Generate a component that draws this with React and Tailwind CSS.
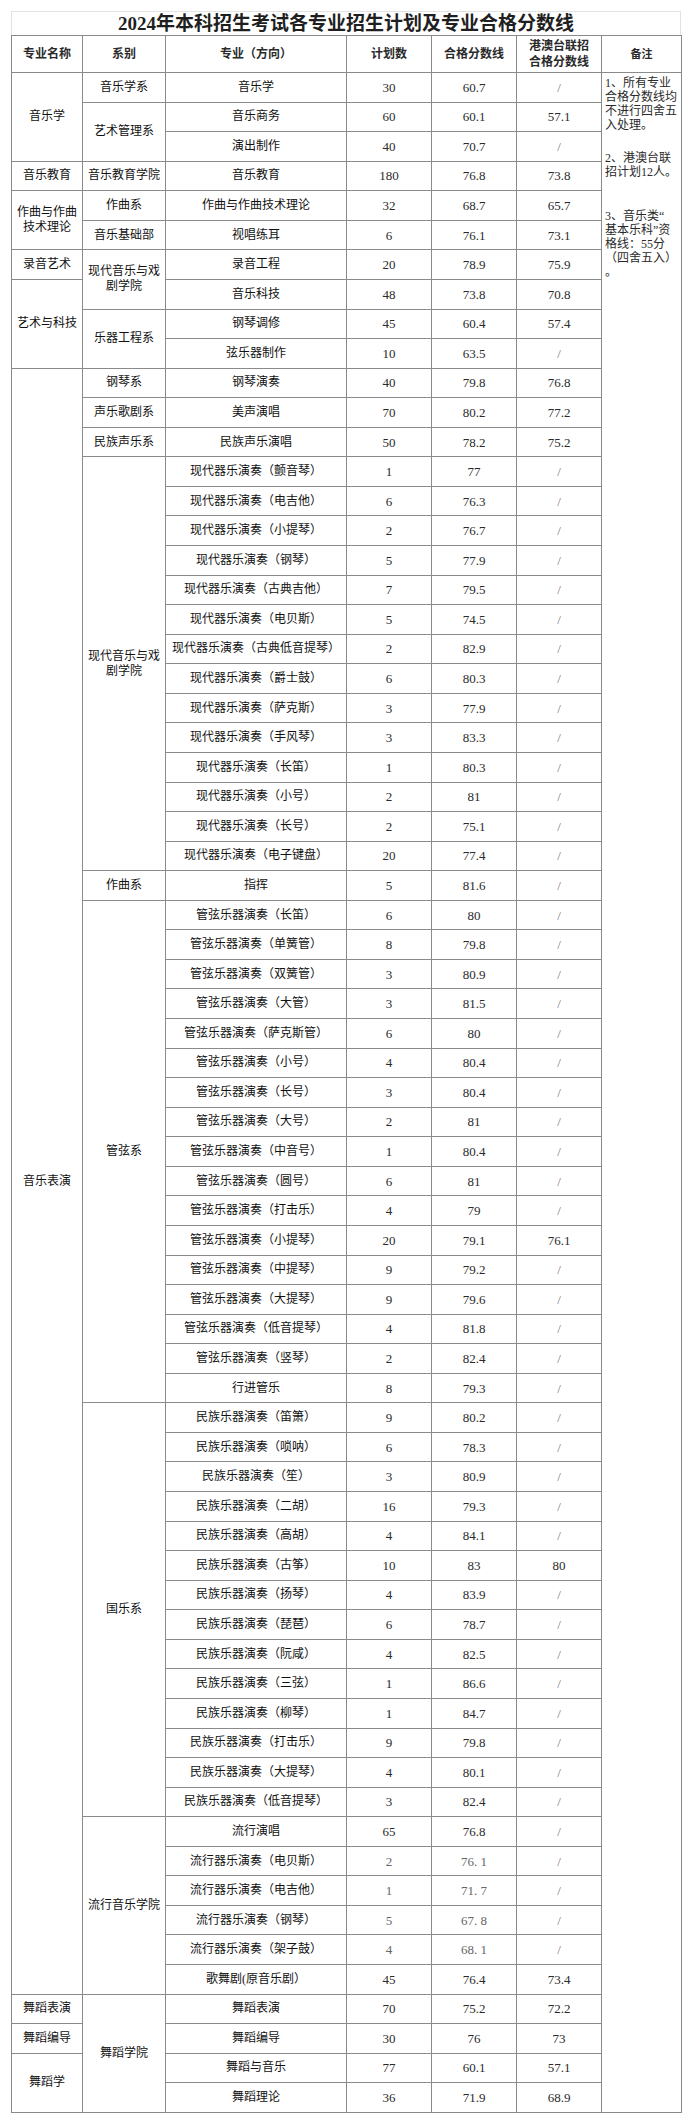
import React from 'react';

const rows = [
  { a: ['音乐学', 3], b: ['音乐学系', 1], m: '音乐学', p: '30', s: '60.7', h: '/' },
  { b: ['艺术管理系', 2], m: '音乐商务', p: '60', s: '60.1', h: '57.1' },
  { m: '演出制作', p: '40', s: '70.7', h: '/' },
  { a: ['音乐教育', 1], b: ['音乐教育学院', 1], m: '音乐教育', p: '180', s: '76.8', h: '73.8' },
  { a: ['作曲与作曲技术理论', 2], b: ['作曲系', 1], m: '作曲与作曲技术理论', p: '32', s: '68.7', h: '65.7' },
  { b: ['音乐基础部', 1], m: '视唱练耳', p: '6', s: '76.1', h: '73.1' },
  { a: ['录音艺术', 1], b: ['现代音乐与戏剧学院', 2], m: '录音工程', p: '20', s: '78.9', h: '75.9' },
  { a: ['艺术与科技', 3], m: '音乐科技', p: '48', s: '73.8', h: '70.8' },
  { b: ['乐器工程系', 2], m: '钢琴调修', p: '45', s: '60.4', h: '57.4' },
  { m: '弦乐器制作', p: '10', s: '63.5', h: '/' },

  { a: ['音乐表演', 55], b: ['钢琴系', 1], m: '钢琴演奏', p: '40', s: '79.8', h: '76.8' },
  { b: ['声乐歌剧系', 1], m: '美声演唱', p: '70', s: '80.2', h: '77.2' },
  { b: ['民族声乐系', 1], m: '民族声乐演唱', p: '50', s: '78.2', h: '75.2' },

  { b: ['现代音乐与戏剧学院', 14], m: '现代器乐演奏（颤音琴）', p: '1', s: '77', h: '/' },
  { m: '现代器乐演奏（电吉他）', p: '6', s: '76.3', h: '/' },
  { m: '现代器乐演奏（小提琴）', p: '2', s: '76.7', h: '/' },
  { m: '现代器乐演奏（钢琴）', p: '5', s: '77.9', h: '/' },
  { m: '现代器乐演奏（古典吉他）', p: '7', s: '79.5', h: '/' },
  { m: '现代器乐演奏（电贝斯）', p: '5', s: '74.5', h: '/' },
  { m: '现代器乐演奏（古典低音提琴）', p: '2', s: '82.9', h: '/' },
  { m: '现代器乐演奏（爵士鼓）', p: '6', s: '80.3', h: '/' },
  { m: '现代器乐演奏（萨克斯）', p: '3', s: '77.9', h: '/' },
  { m: '现代器乐演奏（手风琴）', p: '3', s: '83.3', h: '/' },
  { m: '现代器乐演奏（长笛）', p: '1', s: '80.3', h: '/' },
  { m: '现代器乐演奏（小号）', p: '2', s: '81', h: '/' },
  { m: '现代器乐演奏（长号）', p: '2', s: '75.1', h: '/' },
  { m: '现代器乐演奏（电子键盘）', p: '20', s: '77.4', h: '/' },

  { b: ['作曲系', 1], m: '指挥', p: '5', s: '81.6', h: '/' },

  { b: ['管弦系', 17], m: '管弦乐器演奏（长笛）', p: '6', s: '80', h: '/' },
  { m: '管弦乐器演奏（单簧管）', p: '8', s: '79.8', h: '/' },
  { m: '管弦乐器演奏（双簧管）', p: '3', s: '80.9', h: '/' },
  { m: '管弦乐器演奏（大管）', p: '3', s: '81.5', h: '/' },
  { m: '管弦乐器演奏（萨克斯管）', p: '6', s: '80', h: '/' },
  { m: '管弦乐器演奏（小号）', p: '4', s: '80.4', h: '/' },
  { m: '管弦乐器演奏（长号）', p: '3', s: '80.4', h: '/' },
  { m: '管弦乐器演奏（大号）', p: '2', s: '81', h: '/' },
  { m: '管弦乐器演奏（中音号）', p: '1', s: '80.4', h: '/' },
  { m: '管弦乐器演奏（圆号）', p: '6', s: '81', h: '/' },
  { m: '管弦乐器演奏（打击乐）', p: '4', s: '79', h: '/' },
  { m: '管弦乐器演奏（小提琴）', p: '20', s: '79.1', h: '76.1' },
  { m: '管弦乐器演奏（中提琴）', p: '9', s: '79.2', h: '/' },
  { m: '管弦乐器演奏（大提琴）', p: '9', s: '79.6', h: '/' },
  { m: '管弦乐器演奏（低音提琴）', p: '4', s: '81.8', h: '/' },
  { m: '管弦乐器演奏（竖琴）', p: '2', s: '82.4', h: '/' },
  { m: '行进管乐', p: '8', s: '79.3', h: '/' },

  { b: ['国乐系', 14], m: '民族乐器演奏（笛箫）', p: '9', s: '80.2', h: '/' },
  { m: '民族乐器演奏（唢呐）', p: '6', s: '78.3', h: '/' },
  { m: '民族乐器演奏（笙）', p: '3', s: '80.9', h: '/' },
  { m: '民族乐器演奏（二胡）', p: '16', s: '79.3', h: '/' },
  { m: '民族乐器演奏（高胡）', p: '4', s: '84.1', h: '/' },
  { m: '民族乐器演奏（古筝）', p: '10', s: '83', h: '80' },
  { m: '民族乐器演奏（扬琴）', p: '4', s: '83.9', h: '/' },
  { m: '民族乐器演奏（琵琶）', p: '6', s: '78.7', h: '/' },
  { m: '民族乐器演奏（阮咸）', p: '4', s: '82.5', h: '/' },
  { m: '民族乐器演奏（三弦）', p: '1', s: '86.6', h: '/' },
  { m: '民族乐器演奏（柳琴）', p: '1', s: '84.7', h: '/' },
  { m: '民族乐器演奏（打击乐）', p: '9', s: '79.8', h: '/' },
  { m: '民族乐器演奏（大提琴）', p: '4', s: '80.1', h: '/' },
  { m: '民族乐器演奏（低音提琴）', p: '3', s: '82.4', h: '/' },

  { b: ['流行音乐学院', 6], m: '流行演唱', p: '65', s: '76.8', h: '/' },
  { m: '流行器乐演奏（电贝斯）', p: '2', s: '76. 1', h: '/', g: true },
  { m: '流行器乐演奏（电吉他）', p: '1', s: '71. 7', h: '/', g: true },
  { m: '流行器乐演奏（钢琴）', p: '5', s: '67. 8', h: '/', g: true },
  { m: '流行器乐演奏（架子鼓）', p: '4', s: '68. 1', h: '/', g: true },
  { m: '歌舞剧(原音乐剧）', p: '45', s: '76.4', h: '73.4' },

  { a: ['舞蹈表演', 1], b: ['舞蹈学院', 4], m: '舞蹈表演', p: '70', s: '75.2', h: '72.2' },
  { a: ['舞蹈编导', 1], m: '舞蹈编导', p: '30', s: '76', h: '73' },
  { a: ['舞蹈学', 2], m: '舞蹈与音乐', p: '77', s: '60.1', h: '57.1' },
  { m: '舞蹈理论', p: '36', s: '71.9', h: '68.9' },
];

const cell = 'border border-[#8a8a8a] px-0.5 text-center align-middle';

function Notes() {
  return (
    <div className="pl-[1px] pt-[3px] text-left text-[12px] leading-[14px] text-[#2a2a2a] whitespace-nowrap">
      <div>1、所有专业</div>
      <div>合格分数线均</div>
      <div>不进行四舍五</div>
      <div>入处理。</div>
      <div className="mt-[19px]">2、港澳台联</div>
      <div>招计划12人。</div>
      <div className="mt-[30px]">3、音乐类“</div>
      <div>基本乐科”资</div>
      <div>格线：55分</div>
      <div>（四舍五入）</div>
      <div>。</div>
    </div>
  );
}

export default function App() {
  return (
    <div className="min-h-[2118px] bg-white pl-[11px] pt-[11px] font-['Liberation_Serif','Noto_Sans_CJK_SC',serif] text-[#1a1a1a]">
      <div className="flex h-[24px] w-[670px] items-center justify-center border-x border-t border-[#e2e2e2] text-[19px] font-bold leading-none text-[#1f1f1f]">
        2024年本科招生考试各专业招生计划及专业合格分数线
      </div>
      <table className="w-[670px] table-fixed border-collapse">
        <colgroup>
          <col className="w-[71px]" />
          <col className="w-[83px]" />
          <col className="w-[181px]" />
          <col className="w-[85px]" />
          <col className="w-[85px]" />
          <col className="w-[85px]" />
          <col className="w-[80px]" />
        </colgroup>
        <thead>
          <tr className="h-[37px] text-[12px] font-bold leading-[16px] text-[#2a2a2a]">
            <th className={cell}>专业名称</th>
            <th className={cell}>系别</th>
            <th className={cell}>专业（方向）</th>
            <th className={cell}>计划数</th>
            <th className={cell}>合格分数线</th>
            <th className={cell}>
              港澳台联招
              <br />
              合格分数线
            </th>
            <th className={`${cell} text-[11px]`}>备注</th>
          </tr>
        </thead>
        <tbody>
          {rows.map((r, i) => (
            <tr key={i} className="h-[29.57px] text-[12px] leading-[15px]">
              {r.a && (
                <td rowSpan={r.a[1]} className={`${cell} text-[#111]`}>
                  {r.a[0]}
                </td>
              )}
              {r.b && (
                <td rowSpan={r.b[1]} className={`${cell} text-[#111]`}>
                  {r.b[0]}
                </td>
              )}
              <td className={`${cell} whitespace-nowrap text-[#111]`}>{r.m}</td>
              <td className={`${cell} text-[13px] ${r.g ? 'text-[#666]' : 'text-[#2a2a2a]'}`}>{r.p}</td>
              <td className={`${cell} text-[13px] ${r.g ? 'text-[#666]' : 'text-[#2a2a2a]'}`}>{r.s}</td>
              <td className={`${cell} text-[13px] ${r.h === '/' ? 'text-[#777]' : 'text-[#2a2a2a]'}`}>{r.h}</td>
              {i === 0 && (
                <td rowSpan={rows.length} className={`${cell} align-top`}>
                  <Notes />
                </td>
              )}
            </tr>
          ))}
        </tbody>
      </table>
    </div>
  );
}
